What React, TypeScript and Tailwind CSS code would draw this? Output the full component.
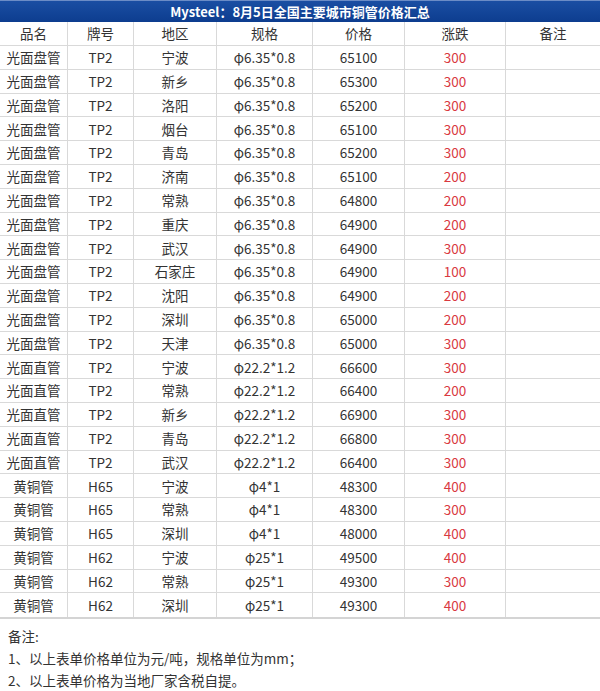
const rows: [string, string, string, string, string, string][] = [
  ['光面盘管', 'TP2', '宁波', 'φ6.35*0.8', '65100', '300'],
  ['光面盘管', 'TP2', '新乡', 'φ6.35*0.8', '65300', '300'],
  ['光面盘管', 'TP2', '洛阳', 'φ6.35*0.8', '65200', '300'],
  ['光面盘管', 'TP2', '烟台', 'φ6.35*0.8', '65100', '300'],
  ['光面盘管', 'TP2', '青岛', 'φ6.35*0.8', '65200', '300'],
  ['光面盘管', 'TP2', '济南', 'φ6.35*0.8', '65100', '200'],
  ['光面盘管', 'TP2', '常熟', 'φ6.35*0.8', '64800', '200'],
  ['光面盘管', 'TP2', '重庆', 'φ6.35*0.8', '64900', '200'],
  ['光面盘管', 'TP2', '武汉', 'φ6.35*0.8', '64900', '300'],
  ['光面盘管', 'TP2', '石家庄', 'φ6.35*0.8', '64900', '100'],
  ['光面盘管', 'TP2', '沈阳', 'φ6.35*0.8', '64900', '200'],
  ['光面盘管', 'TP2', '深圳', 'φ6.35*0.8', '65000', '200'],
  ['光面盘管', 'TP2', '天津', 'φ6.35*0.8', '65000', '300'],
  ['光面直管', 'TP2', '宁波', 'φ22.2*1.2', '66600', '300'],
  ['光面直管', 'TP2', '常熟', 'φ22.2*1.2', '66400', '200'],
  ['光面直管', 'TP2', '新乡', 'φ22.2*1.2', '66900', '300'],
  ['光面直管', 'TP2', '青岛', 'φ22.2*1.2', '66800', '300'],
  ['光面直管', 'TP2', '武汉', 'φ22.2*1.2', '66400', '300'],
  ['黄铜管', 'H65', '宁波', 'φ4*1', '48300', '400'],
  ['黄铜管', 'H65', '常熟', 'φ4*1', '48300', '300'],
  ['黄铜管', 'H65', '深圳', 'φ4*1', '48000', '400'],
  ['黄铜管', 'H62', '宁波', 'φ25*1', '49500', '400'],
  ['黄铜管', 'H62', '常熟', 'φ25*1', '49300', '300'],
  ['黄铜管', 'H62', '深圳', 'φ25*1', '49300', '400'],
];

const headers = ['品名', '牌号', '地区', '规格', '价格', '涨跌', '备注'];

const grid = 'grid grid-cols-[68px_66px_83px_96px_92px_101px_1fr]';
const cell = 'flex items-center justify-center border-r border-[#d9d9d9] last:border-r-0';

export default function App() {
  return (
    <div
      className="w-[600px] h-[691px] bg-white text-[#333] overflow-hidden"
      style={{ fontFamily: '"Noto Sans CJK SC", "Noto Sans", sans-serif' }}
    >
      <div className="h-[22px] bg-gradient-to-b from-[#1a4ea3] to-[#0d3d8f] border-t border-[#6b8cc6] flex items-center justify-center text-white text-[13px] font-bold">
        Mysteel：8月5日全国主要城市铜管价格汇总
      </div>

      <div className="border-b-2 border-[#d4d4d4]">
        <div className={`${grid} h-[24px] border-b border-[#d9d9d9] text-[13.5px]`}>
          {headers.map((h) => (
            <div key={h} className={cell}>
              {h}
            </div>
          ))}
        </div>
        {rows.map((r, i) => (
          <div
            key={i}
            className={`${grid} h-[23.8px] text-[13.5px] ${i < rows.length - 1 ? 'border-b border-[#d9d9d9]' : ''}`}
          >
            {r.map((v, j) => (
              <div key={j} className={`${cell} ${j === 5 ? 'text-[#d9393f]' : ''}`}>
                {v}
              </div>
            ))}
            <div className={cell} />
          </div>
        ))}
      </div>

      <div className="pl-[8px] pt-[6px] text-[13.5px] leading-[22px] text-[#333]">
        <div>备注:</div>
        <div>1、以上表单价格单位为元/吨，规格单位为mm；</div>
        <div>2、以上表单价格为当地厂家含税自提。</div>
      </div>
    </div>
  );
}
